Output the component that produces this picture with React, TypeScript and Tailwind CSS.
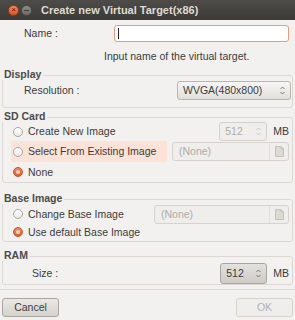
import { FC, ReactNode } from "react";

const font = "font-['Liberation_Sans',Arial,sans-serif]";

const Arrows: FC<{ color?: string }> = ({ color = "#6f6d68" }) => (
  <svg width="5" height="9" viewBox="0 0 5 9" fill="none">
    <path d="M0.5 3 L2.5 1 L4.5 3" stroke={color} strokeWidth="0.9" />
    <path d="M0.5 6 L2.5 8 L4.5 6" stroke={color} strokeWidth="0.9" />
  </svg>
);

const DocIcon: FC = () => (
  <svg width="9" height="11" viewBox="0 0 9 11">
    <path d="M0.5 0.5 H6 L8.5 3 V10.5 H0.5 Z" fill="#dddad5" stroke="#c4c1bc" />
    <path d="M6 0.5 V3 H8.5" fill="none" stroke="#c4c1bc" />
  </svg>
);

const Radio: FC<{ checked?: boolean }> = ({ checked }) =>
  checked ? (
    <span className="flex h-[10px] w-[10px] items-center justify-center rounded-full border border-[#c0552e] bg-gradient-to-b from-[#f4895f] to-[#e35d2c]">
      <span className="h-[4px] w-[4px] rounded-full bg-[#fbd3c2]" />
    </span>
  ) : (
    <span className="h-[10px] w-[10px] rounded-full border border-[#aaa7a1] bg-gradient-to-b from-white to-[#ebe9e6]" />
  );

const Spin: FC<{ value: string; disabled?: boolean }> = ({ value, disabled }) => (
  <div
    className={
      disabled
        ? "flex h-[19px] w-[48px] items-center justify-between rounded-[3px] border border-[#d3d0cb] bg-[#efeeec] pl-[5px] pr-[5px] text-[#aeaba6]"
        : "flex h-[21px] w-[47px] items-center justify-between rounded-[3px] border border-[#a9a6a0] bg-gradient-to-b from-[#e3e1dd] to-[#cfccc7] pl-[5px] pr-[5px] text-[#3c3c3c]"
    }
  >
    <span>{value}</span>
    <Arrows color={disabled ? "#c2bfba" : "#6f6d68"} />
  </div>
);

const NoneCombo: FC<{ w: string }> = ({ w }) => (
  <div className={`flex h-[19px] ${w} items-center rounded-[3px] border border-[#d6d3ce] bg-[#efeeec] text-[#aeaba6]`}>
    <span className="flex-1 pl-[6px]">(None)</span>
    <span className="flex h-full w-[19px] items-center justify-center border-l border-[#e2dfdb]">
      <DocIcon />
    </span>
  </div>
);

const Group: FC<{ title: string; className?: string; children: ReactNode }> = ({ title, className, children }) => (
  <div className={`mx-[2px] rounded-[3px] border border-[#dcd9d4] ${className ?? ""}`}>
    <div className="-ml-[1px] -mt-[8px] w-fit bg-[#f2f1f0] pl-[2px] pr-[2px] text-[10.5px] font-bold leading-[12px] text-[#4c4c4c]">
      {title}
    </div>
    {children}
  </div>
);

export default function App() {
  return (
    <div className={`${font} flex h-[320px] w-[295px] flex-col overflow-hidden bg-[#f2f1f0] text-[10.5px] leading-[13px] text-[#3c3c3c]`}>
      {/* title bar */}
      <div className="flex h-[20px] shrink-0 items-center bg-gradient-to-b from-[#4d4c48] to-[#3b3a36] pl-[8px]">
        <span className="flex h-[11px] w-[11px] items-center justify-center rounded-full border border-[#8d3f22] bg-gradient-to-b from-[#f58a5e] to-[#d9522a] text-[8px] leading-none text-[#3b1a0c]">
          ×
        </span>
        <span className="ml-[2px] flex h-[11px] w-[11px] items-center justify-center rounded-full border border-[#4a4946] bg-gradient-to-b from-[#8e8c87] to-[#6b6a66]">
          <span className="h-[1px] w-[5px] bg-[#3a3935]" />
        </span>
        <span className="ml-[9px] text-[11px] font-bold text-[#dfdbd2]">Create new Virtual Target(x86)</span>
      </div>

      <div className="flex flex-1 flex-col">
        {/* name */}
        <div className="mt-[5px] flex h-[17px] items-center">
          <span className="w-[114px] pl-[24px]">Name :</span>
          <div className="flex h-[17px] w-[175px] items-center rounded-[3px] border border-[#e39b7f] bg-white pl-[3px]">
            <span className="h-[11px] w-[1px] bg-[#222]" />
          </div>
        </div>
        <div className="mt-[8px] pl-[104px]">Input name of the virtual target.</div>

        <Group title="Display" className="mt-[12px] pb-[7px]">
          <div className="mt-[1px] flex items-center justify-between pl-[21px] pr-[1px]">
            <span>Resolution :</span>
            <div className="flex h-[19px] w-[114px] items-center justify-between rounded-[3px] border border-[#b9b6b0] bg-gradient-to-b from-[#f7f6f5] to-[#e2e0dc] pl-[5px] pr-[5px]">
              <span>WVGA(480x800)</span>
              <Arrows />
            </div>
          </div>
        </Group>

        <Group title="SD Card" className="mt-[9px]">
          <div className="flex h-[19px] items-center pl-[10px] pr-[3px]">
            <Radio />
            <span className="ml-[5px] flex-1">Create New Image</span>
            <Spin value="512" disabled />
            <span className="ml-[6px]">MB</span>
          </div>
          <div className="flex h-[21px] items-center pl-[8px] pr-[3px]">
            <div className="flex h-[21px] w-[156px] items-center bg-[#fce2d7] pl-[2px]">
              <Radio />
              <span className="ml-[5px]">Select From Existing Image</span>
            </div>
            <div className="ml-auto">
              <NoneCombo w="w-[117px]" />
            </div>
          </div>
          <div className="flex h-[20px] items-center pl-[10px]">
            <Radio checked />
            <span className="ml-[5px]">None</span>
          </div>
        </Group>

        <Group title="Base Image" className="mt-[16px] pb-[1px]">
          <div className="flex h-[20px] items-center pl-[10px] pr-[3px]">
            <Radio />
            <span className="ml-[5px]">Change Base Image</span>
            <div className="ml-auto">
              <NoneCombo w="w-[135px]" />
            </div>
          </div>
          <div className="flex h-[16px] items-center pl-[10px]">
            <Radio checked />
            <span className="ml-[5px]">Use default Base Image</span>
          </div>
        </Group>

        <Group title="RAM" className="mt-[14px]">
          <div className="mt-[1px] flex h-[22px] items-center pl-[29px] pr-[3px]">
            <span className="flex-1">Size :</span>
            <Spin value="512" />
            <span className="ml-[6px]">MB</span>
          </div>
        </Group>

        <div className="mt-[4px] border-t border-[#dedbd6]" />

        <div className="mt-[8px] flex items-center justify-between px-[2px]">
          <button className="h-[19px] w-[57px] rounded-[3px] border border-[#a9a6a0] bg-gradient-to-b from-[#ebe9e6] to-[#d5d2cd] text-[10.5px] text-[#3c3c3c]">
            Cancel
          </button>
          <button className="h-[19px] w-[57px] rounded-[3px] border border-[#d6d3ce] bg-[#efeeec] text-[10.5px] text-[#b4b1ac]">
            OK
          </button>
        </div>
      </div>
    </div>
  );
}
